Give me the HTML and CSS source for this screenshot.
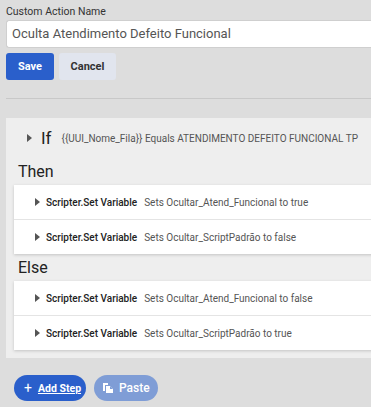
FILE: index.html
```html
<!DOCTYPE html>
<html>
<head>
<meta charset="utf-8">
<link rel="stylesheet" href="styles.css">
</head>
<body>
<div class="page">
  <label class="label">Custom Action Name</label>
  <div class="input">Oculta Atendimento Defeito Funcional</div>
  <div class="actions">
    <button class="btn btn-save">Save</button>
    <button class="btn btn-cancel">Cancel</button>
  </div>
  <hr class="divider">
  <div class="panel">
    <div class="if-row">
      <span class="tri"></span>
      <span class="if-word">If</span>
      <span class="cond">{{UUI_Nome_Fila}} Equals ATENDIMENTO DEFEITO FUNCIONAL TP</span>
    </div>
    <div class="section-title">Then</div>
    <div class="cards">
      <div class="card"><span class="tri"></span><span class="step-name">Scripter.Set Variable</span><span class="step-desc">Sets Ocultar_Atend_Funcional to true</span></div>
      <div class="card"><span class="tri"></span><span class="step-name">Scripter.Set Variable</span><span class="step-desc">Sets Ocultar_ScriptPadrão to false</span></div>
    </div>
    <div class="section-title else">Else</div>
    <div class="cards">
      <div class="card"><span class="tri"></span><span class="step-name">Scripter.Set Variable</span><span class="step-desc">Sets Ocultar_Atend_Funcional to false</span></div>
      <div class="card"><span class="tri"></span><span class="step-name">Scripter.Set Variable</span><span class="step-desc">Sets Ocultar_ScriptPadrão to true</span></div>
    </div>
  </div>
  <div class="bottom">
    <button class="pill pill-add"><span class="plus">+</span><span class="u">Add Step</span></button>
    <button class="pill pill-paste"><svg class="paste-icon" width="10" height="10" viewBox="0 0 10 10"><path d="M0 0h5v2H2v6H0z" fill="#fff"/><path d="M3 3h4l3 3v4H3z" fill="#fff"/><path d="M7 3v3h3" fill="#7f9dd6"/></svg><span>Paste</span></button>
  </div>
</div>
</body>
</html>
```
FILE: styles.css
```css
html, body {
  margin: 0;
  padding: 0;
  overflow: hidden;
  background: #dddddd;
}
body {
  font-family: Roboto, "Noto Sans", sans-serif;
  color: #333;
}
.page {
  width: 400px;
  padding: 5px 0 0 6px;
  box-sizing: border-box;
}
.label {
  display: block;
  font-size: 10.5px;
  color: #333;
  height: 15px;
  line-height: 13px;
}
.input {
  height: 28px;
  box-sizing: border-box;
  background: #fff;
  border: 1px solid #cfcfcf;
  border-right: none;
  border-radius: 3px 0 0 3px;
  font-size: 13px;
  line-height: 26px;
  padding-left: 5px;
  color: #555;
}
.actions {
  display: flex;
  gap: 5px;
  margin-top: 5px;
}
.btn {
  height: 27px;
  border: none;
  border-radius: 3px;
  font-family: Roboto, sans-serif;
  font-size: 11px;
  font-weight: 700;
  padding: 0;
}
.btn-save {
  width: 48px;
  background: #2a5fcb;
  color: #fff;
}
.btn-cancel {
  width: 57px;
  background: #e1e5ee;
  color: #333;
}
.divider {
  border: none;
  border-top: 1px solid #c8c8c8;
  margin: 18px 0 0 0;
  height: 0;
}
.panel {
  margin-top: 19px;
  background: #eeeeee;
  padding: 0 0 8px 8px;
}
.if-row {
  height: 40px;
  display: flex;
  align-items: center;
  padding-left: 13px;
}
.tri {
  width: 0;
  height: 0;
  border-top: 4px solid transparent;
  border-bottom: 4px solid transparent;
  border-left: 5px solid #555;
  flex: none;
}
.if-word {
  font-size: 17px;
  color: #222;
  margin-left: 9px;
  margin-right: 10px;
}
.cond {
  font-size: 10px;
  color: #555;
  white-space: nowrap;
}
.section-title {
  font-size: 16px;
  color: #222;
  height: 27px;
  line-height: 28px;
  padding-left: 4px;
}
.cards {
  background: #fff;
  box-shadow: 0 1px 3px rgba(0,0,0,0.18);
}
.card {
  height: 34px;
  display: flex;
  align-items: center;
  padding-left: 21px;
  border-bottom: 1px solid #e4e4e4;
  white-space: nowrap;
}
.card:last-child {
  border-bottom: none;
}
.step-name {
  font-size: 10px;
  font-weight: 500;
  color: #222;
  margin-left: 6px;
}
.step-desc {
  font-size: 10px;
  color: #555;
  margin-left: 7px;
}
.bottom {
  display: flex;
  gap: 8px;
  margin-top: 17px;
  padding-left: 8px;
}
.pill {
  height: 26px;
  border: none;
  border-radius: 13px;
  color: #fff;
  font-family: Roboto, sans-serif;
  display: flex;
  align-items: center;
  padding: 0;
}
.pill-add {
  width: 72px;
  background: #2a5fcb;
  font-size: 10.5px;
  font-weight: 700;
  padding-left: 10px;
}
.plus {
  font-size: 14px;
  font-weight: 400;
  margin-right: 6px;
}
.u {
  text-decoration: underline;
}
.pill-paste {
  width: 64px;
  background: #7f9dd6;
  font-size: 12px;
  font-weight: 500;
  padding-left: 9px;
}
.paste-icon {
  margin-right: 6px;
}
```
